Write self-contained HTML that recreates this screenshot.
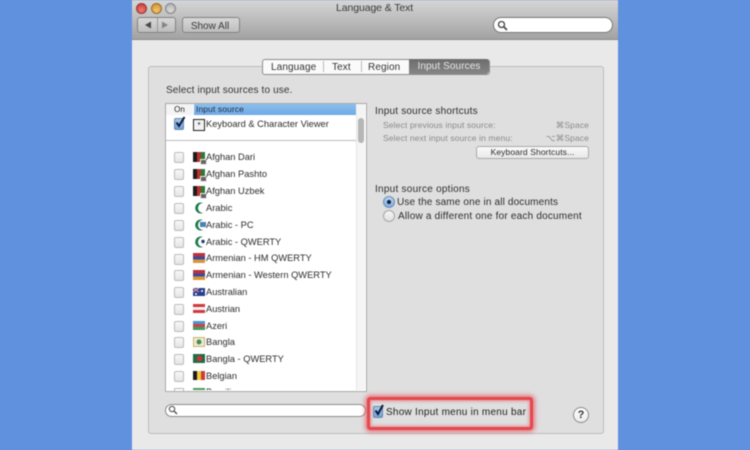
<!DOCTYPE html>
<html><head><meta charset="utf-8"><style>
html,body{margin:0;padding:0}
body{width:750px;height:450px;overflow:hidden;background:#5f91de;position:relative;font-family:"Liberation Sans",sans-serif;color:#222}
#w{position:absolute;left:132px;top:0;width:486px;height:450px;background:#e9e9e9;overflow:hidden;filter:blur(.45px)}
.a{position:absolute;white-space:nowrap}
.t{position:absolute;white-space:nowrap;font-size:9.3px;line-height:16px;letter-spacing:0;color:#2c2c2c}
.cb{position:absolute;left:42px;width:8px;height:9px;border:1px solid #bbb;border-radius:2px;background:linear-gradient(#f8f8f8,#e4e4e4)}
.ic{position:absolute;left:61px;width:12px;height:10px;overflow:hidden}
.af{background:linear-gradient(90deg,#1c1c1c 35%,#b8332c 35% 68%,#2b7a3a 68%)}
.bd{position:absolute;left:68px;width:5px;height:4px;background:#666;border:.5px solid #eee}
svg{display:block}
</style></head><body><div id="w">
<div class="a" style="left:0;top:0;width:486px;height:39px;background:linear-gradient(#d6d6d6,#a2a2a2);border-bottom:1px solid #8a8a8a"></div>
<div class="a" style="left:4px;top:2.5px;width:9px;height:9px;border-radius:50%;background:radial-gradient(circle at 50% 70%,#f07a70,#c8322c);border:.5px solid #8f3a36"></div>
<div class="a" style="left:19px;top:2.5px;width:9px;height:9px;border-radius:50%;background:radial-gradient(circle at 50% 70%,#f2c46e,#cf8a28);border:.5px solid #93702f"></div>
<div class="a" style="left:33px;top:2.5px;width:9px;height:9px;border-radius:50%;background:radial-gradient(circle at 50% 70%,#dcdcdc,#a8a8a8);border:.5px solid #858585"></div>
<div class="a" style="left:204px;top:2px;font-size:10.5px;line-height:13px;letter-spacing:-.1px;color:#3a3a3a">Language &amp; Text</div>

<div class="a" style="left:5px;top:17px;width:37px;height:14px;border:1px solid #828282;border-radius:3px;background:linear-gradient(#d8d8d8,#bdbdbd)"></div>
<div class="a" style="left:25px;top:18px;width:1px;height:14px;background:#999"></div>
<svg class="a" style="left:12px;top:21px" width="8" height="8"><path d="M7 0.5V7.5L1 4Z" fill="#4a4a4a"/></svg>
<svg class="a" style="left:29px;top:21px" width="8" height="8"><path d="M1 0.5V7.5L7 4Z" fill="#858585"/></svg>
<div class="a" style="left:50px;top:17px;width:56px;height:14px;border:1px solid #828282;border-radius:3px;background:linear-gradient(#d8d8d8,#bdbdbd);font-size:10px;line-height:17px;text-align:center;letter-spacing:0;color:#3a3a3a;text-indent:-2px">Show All</div>
<div class="a" style="left:361px;top:17px;width:118px;height:14px;border:1px solid #777;border-radius:8px;background:#fff"></div>
<svg class="a" style="left:365px;top:20px" width="11" height="11"><circle cx="4.5" cy="4.5" r="3" fill="none" stroke="#444" stroke-width="1.3"/><path d="M7 7L10 10" stroke="#444" stroke-width="1.6"/></svg>

<div class="a" style="left:16px;top:66px;width:454px;height:366px;background:#dfdfdf;border:1px solid #bcbcbc;border-radius:3px"></div>

<div class="a" style="left:130px;top:59px;width:226px;height:14px;border:1px solid #8c8c8c;border-radius:3px;background:#fafafa"></div>
<div class="a" style="left:139px;top:60px;font-size:10px;line-height:15px;letter-spacing:.1px;color:#333">Language</div>
<div class="a" style="left:191px;top:61px;width:1px;height:11px;background:#bbb"></div>
<div class="a" style="left:200px;top:60px;font-size:10px;line-height:15px;letter-spacing:.1px;color:#333">Text</div>
<div class="a" style="left:229px;top:61px;width:1px;height:11px;background:#bbb"></div>
<div class="a" style="left:236px;top:60px;font-size:10px;line-height:15px;letter-spacing:.1px;color:#333">Region</div>
<div class="a" style="left:277px;top:59px;width:80px;height:15px;border-radius:0 3px 3px 0;background:linear-gradient(#6c6c6c,#868686);font-size:10px;line-height:16px;letter-spacing:.1px;color:#e6e6e6;text-align:center">Input Sources</div>

<div class="a" style="left:34px;top:85px;font-size:10px;line-height:12px;letter-spacing:.13px;color:#333">Select input sources to use.</div>

<div class="a" style="left:33px;top:103px;width:200px;height:287px;background:#fff;border:1px solid #aaa"></div>
<div class="a" style="left:34px;top:104px;width:27px;height:11px;background:#f4f4f4;font-size:8px;line-height:11px;text-align:center;letter-spacing:.1px">On</div>
<div class="a" style="left:62px;top:104px;width:162px;height:11px;background:linear-gradient(#8cc0ee,#6fa9e4);font-size:8.5px;line-height:11px;letter-spacing:.1px;color:#1d2a44;text-indent:2px">Input source</div>
<div class="a" style="left:224px;top:104px;width:9px;height:11px;background:#f4f4f4"></div>
<div class="a" style="left:224px;top:115px;width:9px;height:275px;background:#f5f5f5;border-left:1px solid #e6e6e6;box-sizing:border-box"></div>
<div class="a" style="left:226px;top:118px;width:6px;height:25px;background:#b6b6b6;border-radius:3px"></div>
<div class="a" style="left:34px;top:140px;width:190px;height:1px;background:#bdbdbd"></div>

<div class="a" style="left:42px;top:118px;width:8px;height:10px;background:linear-gradient(#a9c9ec,#6ea2da);border:1px solid #6786a8;border-radius:2px"></div>
<svg class="a" style="left:42px;top:115px" width="14" height="14"><path d="M2.5 7.5L5 11L10.5 2" fill="none" stroke="#111a3c" stroke-width="2"/></svg>
<div class="a" style="left:61px;top:119px;width:10px;height:10px;border:1px solid #222;background:#f2f2f2;font-size:8px;line-height:11px;text-align:center">*</div>
<div class="t" style="left:74px;top:116px">Keyboard &amp; Character Viewer</div>

<div class="cb" style="top:152px"></div><div class="ic af" style="top:152px"></div><div class="bd" style="top:159px"></div><div class="t" style="left:74px;top:149px">Afghan Dari</div>
<div class="cb" style="top:169px"></div><div class="ic af" style="top:169px"></div><div class="bd" style="top:176px"></div><div class="t" style="left:74px;top:166px">Afghan Pashto</div>
<div class="cb" style="top:186px"></div><div class="ic af" style="top:186px"></div><div class="bd" style="top:193px"></div><div class="t" style="left:74px;top:183px">Afghan Uzbek</div>
<div class="cb" style="top:203px"></div><svg class="a" style="left:62px;top:202px" width="12" height="12"><path d="M9 1A5.5 5.5 0 1 0 9 11A5 5 0 0 1 9 1Z" fill="#1c7a4a"/></svg><div class="t" style="left:74px;top:200px">Arabic</div>
<div class="cb" style="top:220px"></div><svg class="a" style="left:62px;top:219px" width="12" height="12"><path d="M9 1A5.5 5.5 0 1 0 9 11A5 5 0 0 1 9 1Z" fill="#1c7a4a"/><rect x="6" y="3" width="6" height="5" fill="#4d7fb8"/></svg><div class="t" style="left:74px;top:217px">Arabic - PC</div>
<div class="cb" style="top:237px"></div><svg class="a" style="left:62px;top:236px" width="12" height="12"><path d="M9 1A5.5 5.5 0 1 0 9 11A5 5 0 0 1 9 1Z" fill="#1c7a4a"/><circle cx="9" cy="5.5" r="1.7" fill="#1a3f6f"/></svg><div class="t" style="left:74px;top:234px">Arabic - QWERTY</div>
<div class="cb" style="top:254px"></div><div class="ic" style="top:253px;background:linear-gradient(#b8333c 33%,#3a4a9c 33% 66%,#d8953a 66%)"></div><div class="t" style="left:74px;top:250px">Armenian - HM QWERTY</div>
<div class="cb" style="top:270px"></div><div class="ic" style="top:270px;background:linear-gradient(#b8333c 33%,#3a4a9c 33% 66%,#d8953a 66%)"></div><div class="t" style="left:74px;top:267px">Armenian - Western QWERTY</div>
<div class="cb" style="top:287px"></div><div class="ic" style="top:288px;height:8px;background:#2c3f8e"></div><svg class="a" style="left:61px;top:288px" width="12" height="8"><path d="M0 0L6 4M6 0L0 4" stroke="#e8a0a8" stroke-width="1"/><circle cx="9" cy="3" r="1" fill="#fff"/><circle cx="3" cy="6" r="1" fill="#fff"/></svg><div class="t" style="left:74px;top:284px">Australian</div>
<div class="cb" style="top:304px"></div><div class="ic" style="top:304px;height:9px;background:linear-gradient(#cf3a3e 33%,#f2f2f2 33% 66%,#cf3a3e 66%)"></div><div class="t" style="left:74px;top:301px">Austrian</div>
<div class="cb" style="top:321px"></div><div class="ic" style="top:321px;height:9px;background:linear-gradient(#4d96c8 33%,#c8444c 33% 66%,#3f9c5c 66%)"></div><div class="t" style="left:74px;top:318px">Azeri</div>
<div class="cb" style="top:337px"></div><div class="ic" style="top:337px;height:10px;background:#efe9d0;border:1px solid #c9b26a;box-sizing:border-box"></div><svg class="a" style="left:64px;top:339px" width="6" height="6"><circle cx="3" cy="3" r="2.5" fill="#3f8c5c"/></svg><div class="t" style="left:74px;top:334px">Bangla</div>
<div class="cb" style="top:354px"></div><div class="ic" style="top:354px;height:9px;background:#1f6b45"></div><svg class="a" style="left:64px;top:355px" width="7" height="7"><circle cx="3.5" cy="3.5" r="3" fill="#b83a3a"/></svg><div class="t" style="left:74px;top:351px">Bangla - QWERTY</div>
<div class="cb" style="top:371px"></div><div class="ic" style="top:371px;height:9px;background:linear-gradient(90deg,#1a1a1a 33%,#f0cc3a 33% 66%,#cf3a3a 66%)"></div><div class="t" style="left:74px;top:368px">Belgian</div>
<div class="a" style="left:42px;top:388px;width:8px;height:2px;border:1px solid #bbb;border-bottom:0"></div>
<div class="a" style="left:61px;top:388px;width:12px;height:2px;background:#4c9a58"></div>
<div class="a" style="left:74px;top:386px;font-size:9.3px;line-height:12px;height:4px;overflow:hidden;color:#2c2c2c">Brazilian</div>

<div class="a" style="left:243px;top:106px;font-size:10px;line-height:12px;letter-spacing:.2px;color:#2c2c2c">Input source shortcuts</div>
<div class="a" style="left:251px;top:120px;font-size:8.5px;line-height:11px;letter-spacing:.12px;color:#8a8a8a">Select previous input source:</div>
<div class="a" style="left:251px;top:133px;font-size:8.5px;line-height:11px;letter-spacing:.12px;color:#8a8a8a">Select next input source in menu:</div>
<div class="a" style="right:29px;top:120px;font-size:8.5px;line-height:11px;letter-spacing:.1px;color:#8a8a8a;font-family:'Liberation Sans','DejaVu Sans',sans-serif">⌘Space</div>
<div class="a" style="right:29px;top:133px;font-size:8.5px;line-height:11px;letter-spacing:.1px;color:#8a8a8a;font-family:'Liberation Sans','DejaVu Sans',sans-serif">⌥⌘Space</div>
<div class="a" style="left:344px;top:146px;width:111px;height:11px;border:1px solid #a8a8a8;border-radius:3px;background:linear-gradient(#fafafa,#e8e8e8);font-size:8.5px;line-height:10px;text-align:center;letter-spacing:.1px;color:#2c2c2c">Keyboard Shortcuts...</div>

<div class="a" style="left:243px;top:184px;font-size:10px;line-height:12px;letter-spacing:.25px;color:#2c2c2c">Input source options</div>
<div class="a" style="left:251px;top:196px;width:10px;height:10px;border-radius:50%;background:linear-gradient(#b9d3ee,#7eaee0);border:1px solid #6b8fb5"></div>
<div class="a" style="left:255px;top:200px;width:4px;height:4px;border-radius:50%;background:#13203c"></div>
<div class="t" style="left:265px;top:195px;font-size:10px;letter-spacing:.15px">Use the same one in all documents</div>
<div class="a" style="left:251px;top:210px;width:10px;height:10px;border-radius:50%;background:linear-gradient(#f4f4f4,#e2e2e2);border:1px solid #a5a5a5"></div>
<div class="t" style="left:266px;top:209px;font-size:10px;letter-spacing:.2px">Allow a different one for each document</div>

<div class="a" style="left:33px;top:404px;width:199px;height:11px;border:1px solid #8c8c8c;border-radius:7px;background:#fff"></div>
<svg class="a" style="left:36px;top:405px" width="10" height="10"><circle cx="4" cy="4" r="2.7" fill="none" stroke="#555" stroke-width="1.1"/><path d="M6 6L9 9" stroke="#555" stroke-width="1.4"/></svg>

<div class="a" style="left:235px;top:397px;width:166px;height:33px;box-sizing:border-box;border:3px solid #e5474d;border-radius:3px;box-shadow:0 0 4px 2px rgba(232,70,80,.65),inset 0 0 3px 1px rgba(232,70,80,.55)"></div>
<div class="a" style="left:241px;top:406px;width:8px;height:10px;background:linear-gradient(#a9c9ec,#6ea2da);border:1px solid #6786a8;border-radius:2px"></div>
<svg class="a" style="left:241px;top:403px" width="13" height="13"><path d="M2.5 7.5L5 11L10 2" fill="none" stroke="#0f1838" stroke-width="2"/></svg>
<div class="t" style="left:254px;top:405px;font-size:10px;letter-spacing:.25px;color:#222">Show Input menu in menu bar</div>

<div class="a" style="left:441px;top:407px;width:14px;height:14px;border:1px solid #8a8a8a;border-radius:50%;background:linear-gradient(#fff,#ececec);font-size:11px;font-weight:bold;line-height:15px;text-align:center;color:#333">?</div>
</div></body></html>
